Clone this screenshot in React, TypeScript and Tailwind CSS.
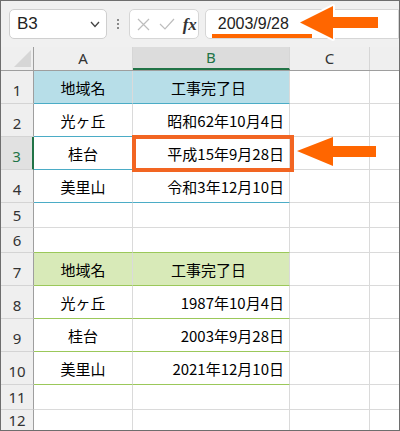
const cjk = { fontFamily: '"Noto Sans CJK JP", "Noto Sans", sans-serif' };
const ui = { fontFamily: '"Noto Sans", "Liberation Sans", sans-serif' };

type Row = {
  n: number;
  h: string;
  a?: string;
  b?: string;
  fill?: string;
  line?: string;
  head?: boolean;
  sel?: boolean;
  short?: boolean;
};

const rows: Row[] = [
  { n: 1, h: "h-[33px]", a: "地域名", b: "工事完了日", fill: "bg-[#b7dee8]", line: "border-b-[#4bacc6]", head: true },
  { n: 2, h: "h-[33px]", a: "光ヶ丘", b: "昭和62年10月4日", line: "border-b-[#4bacc6]" },
  { n: 3, h: "h-[33px]", a: "桂台", b: "平成15年9月28日", line: "border-b-[#4bacc6]", sel: true },
  { n: 4, h: "h-[33px]", a: "美里山", b: "令和3年12月10日", line: "border-b-[#4bacc6]" },
  { n: 5, h: "h-[25px]", short: true },
  { n: 6, h: "h-[25px]", line: "border-b-[#9bc85a]", short: true },
  { n: 7, h: "h-[33px]", a: "地域名", b: "工事完了日", fill: "bg-[#d8eab8]", line: "border-b-[#9bc85a]", head: true },
  { n: 8, h: "h-[33px]", a: "光ヶ丘", b: "1987年10月4日", line: "border-b-[#9bc85a]" },
  { n: 9, h: "h-[33px]", a: "桂台", b: "2003年9月28日", line: "border-b-[#9bc85a]" },
  { n: 10, h: "h-[33px]", a: "美里山", b: "2021年12月10日", line: "border-b-[#9bc85a]" },
  { n: 11, h: "h-[25px]", short: true },
  { n: 12, h: "h-[22px]", short: true },
];

function SheetRow({ r }: { r: Row }) {
  const line = r.line ?? "border-b-[#dadada]";
  return (
    <div className={`flex ${r.h}`}>
      <div
        className={`w-[33px] shrink-0 flex items-center justify-center text-[15px] leading-none border-b border-b-[#d4d4d4] ${
          r.short ? "pt-0" : "pt-[6px]"
        } ${r.sel ? "bg-[#e1e1e1] text-[#217346] border-r-2 border-r-[#217346]" : "bg-[#efefef] text-[#333] border-r border-r-[#9e9e9e]"}`}
        style={ui}
      >
        {r.n}
      </div>
      <div
        className={`w-[99px] shrink-0 flex items-center justify-center pt-[3px] text-[15px] text-black border-r border-r-[#dadada] border-b ${line} ${r.fill ?? ""}`}
        style={cjk}
      >
        {r.a}
      </div>
      <div
        className={`w-[157px] shrink-0 flex items-center pt-[3px] pr-[5px] text-[15px] text-black border-r border-r-[#dadada] border-b ${line} ${r.fill ?? ""} ${
          r.head ? "justify-center" : "justify-end"
        }`}
        style={cjk}
      >
        {r.b}
      </div>
      <div className="w-[80px] shrink-0 border-r border-r-[#dadada] border-b border-b-[#dadada]" />
      <div className="flex-1 border-b border-b-[#dadada]" />
    </div>
  );
}

export default function App() {
  return (
    <div className="relative w-[400px] h-[431px] overflow-hidden border border-[#6e6e6e] bg-white">
      {/* toolbar */}
      <div className="h-[46px] bg-[#f0f0f0] flex items-start pt-[8px] pl-[8px]">
        <div className="w-[101px] h-[30px] rounded-[5px] border border-[#cfcfcf] bg-white flex items-center justify-between pl-[7px] pr-[6px]">
          <span className="text-[17px] text-[#222]" style={{ fontFamily: '"Liberation Sans", sans-serif' }}>
            B3
          </span>
          <svg width="10" height="7" viewBox="0 0 10 7">
            <polyline points="1,1 5,5.5 9,1" fill="none" stroke="#444" strokeWidth="1.3" />
          </svg>
        </div>
        <div className="w-[22px] h-[30px] flex flex-col items-center justify-center gap-[2px]">
          <span className="w-[2px] h-[2px] bg-[#8a8a8a]" />
          <span className="w-[2px] h-[2px] bg-[#8a8a8a]" />
          <span className="w-[2px] h-[2px] bg-[#8a8a8a]" />
        </div>
        <div className="w-[72px] h-[30px] rounded-[5px] border border-[#d6d6d6] bg-white flex items-center pl-[7px]">
          <svg width="13" height="13" viewBox="0 0 13 13">
            <path d="M1 1 L12 12 M12 1 L1 12" stroke="#bdbdbd" strokeWidth="1.2" />
          </svg>
          <svg width="16" height="12" viewBox="0 0 16 12" className="ml-[9px]">
            <polyline points="1,6 6,11 15,1" fill="none" stroke="#bdbdbd" strokeWidth="1.2" />
          </svg>
          <span className="ml-[8px] text-[17px] italic font-bold text-[#333] leading-none" style={{ fontFamily: '"Liberation Serif", serif' }}>
            fx
          </span>
        </div>
        <div className="ml-[6px] w-[200px] h-[30px] rounded-l-[5px] border border-[#d6d6d6] bg-white flex items-center pl-[12px]">
          <span className="text-[16px] text-[#222]" style={{ fontFamily: '"Liberation Sans", sans-serif' }}>
            2003/9/28
          </span>
        </div>
      </div>

      {/* column header */}
      <div className="flex h-[24px] bg-[#efefef] border-b border-b-[#9e9e9e]" style={ui}>
        <div className="w-[33px] shrink-0 border-r border-r-[#9e9e9e] relative">
          <svg width="33" height="23" viewBox="0 0 33 23" className="absolute left-0 top-0">
            <polygon points="30,3 30,20 13,20" fill="#d6d6d6" />
          </svg>
        </div>
        <div className="w-[99px] shrink-0 flex items-center justify-center text-[15px] text-[#333] border-r border-r-[#d6d6d6]">A</div>
        <div className="w-[157px] shrink-0 flex items-center justify-center text-[15px] text-[#217346] bg-[#dcdcdc] border-b-2 border-b-[#217346] border-r border-r-[#d6d6d6]">
          B
        </div>
        <div className="w-[80px] shrink-0 flex items-center justify-center text-[15px] text-[#333] border-r border-r-[#d6d6d6]">C</div>
        <div className="flex-1" />
      </div>

      {rows.map((r) => (
        <SheetRow key={r.n} r={r} />
      ))}

      {/* highlight box on B3 */}
      <div className="absolute left-[131px] top-[134px] w-[162px] h-[37px] border-[4px] border-[#f26522]" />

      {/* underline in formula bar */}
      <div className="absolute left-[211px] top-[33px] w-[100px] h-[4px] bg-[#ff6600]" />

      {/* arrows */}
      <svg className="absolute left-0 top-0" width="400" height="431" viewBox="0 0 400 431">
        <polygon
          points="300,22.5 333,6 333,17 378,17 378,28 333,28 333,39"
          fill="#ff6600"
          stroke="#ffffff"
          strokeWidth="4"
          strokeLinejoin="round"
          paintOrder="stroke"
          transform="translate(-1,-1)"
        />
        <polygon points="297,151 333,137 333,146 376,146 376,157 333,157 333,166" fill="#ff6600" transform="translate(-1,-1)" />
      </svg>
    </div>
  );
}
